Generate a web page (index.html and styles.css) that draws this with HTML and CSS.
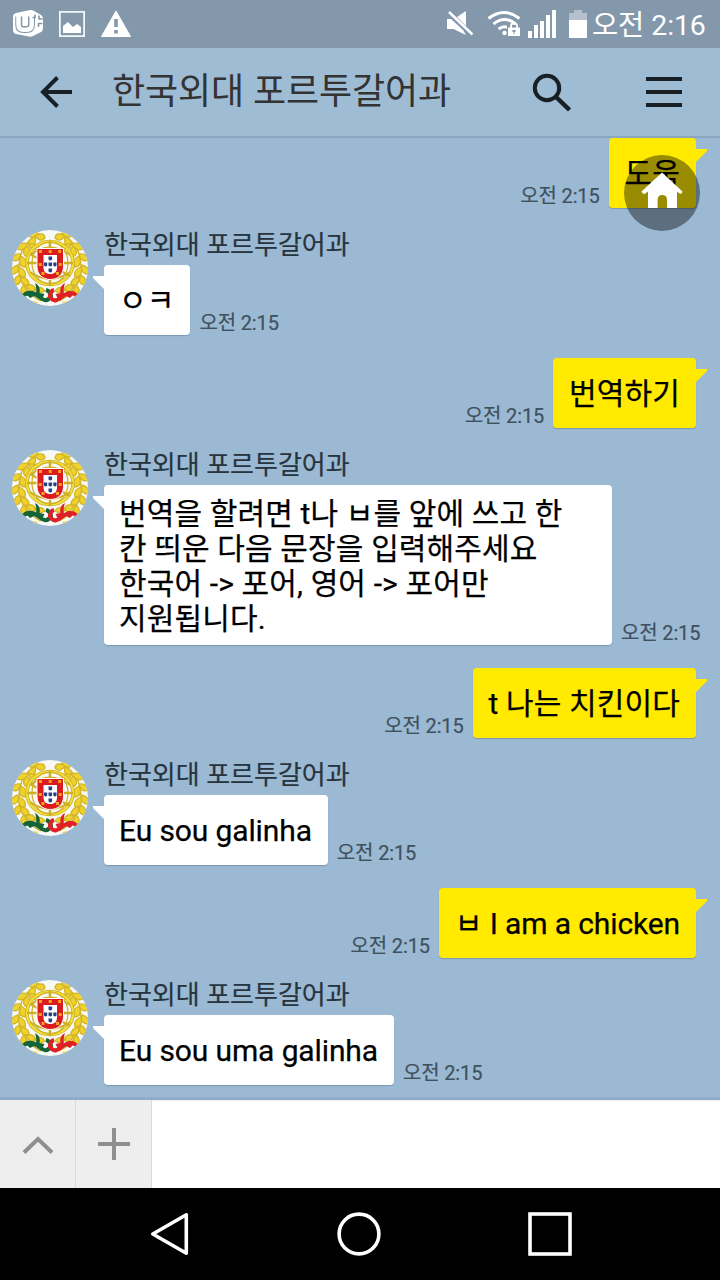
FILE: index.html
```html
<!DOCTYPE html>
<html lang="ko">
<head>
<meta charset="utf-8">
<title>한국외대 포르투갈어과</title>
<link rel="stylesheet" href="styles.css">
</head>
<body>
<svg class="defs" width="0" height="0" aria-hidden="true">
  <defs>
    <clipPath id="disc"><circle cx="38" cy="38" r="38"/></clipPath>
    <g id="laurel">
      <path d="M29 71C15 64 7 53 7 37C7 22 14 10 27 4" fill="none" stroke="#c9a80c" stroke-width="1.2"/>
      <g fill="#efd32c" stroke="#d3b628" stroke-width="1.3">
        <path d="M27 4q-7-5-11 1q4 5 11-1zM23 7q2 8-5 10q-5-6 5-10zM16 14q-9-3-11 5q7 3 11-5zM15 16q6 6 0 11q-7-4 0-11z"/>
        <path d="M9 24q-8-1-9 6q7 3 9-6zM9 26q8 4 4 11q-8-1-4-11zM6 35q-8 2-6 9q8 0 6-9zM7 37q8 3 6 10q-8 0-6-10z"/>
        <path d="M7 45q-7 4-3 10q7-2 3-10zM9 47q8 1 8 8q-8 2-8-8zM12 55q-6 5-1 10q6-3 1-10zM14 55q8-2 10 5q-7 4-10-5zM22 59q7-4 11 2q-6 4-11-2z"/>
        <path d="M23 6q9-5 10 2q-5 5-10-2zM17 14q8-1 7 5q-6 1-7-5z"/>
      </g>
    </g>
    <symbol id="crest" viewBox="0 0 76 76">
      <g clip-path="url(#disc)">
        <rect width="76" height="76" fill="#f8f8f4"/>
        <use href="#laurel"/>
        <use href="#laurel" transform="matrix(-1 0 0 1 76 0)"/>
        <g fill="none" stroke="#cdb024">
          <ellipse cx="38" cy="33" rx="23" ry="21.5" stroke-width="3.6"/>
          <ellipse cx="38" cy="33" rx="23" ry="21.5" stroke="#f4de3c" stroke-width="2"/>
          <path d="M38 11v45M15 33h46" stroke-width="2.4"/>
          <ellipse cx="38" cy="33" rx="18" ry="21" stroke-width="1.2"/>
          <path d="M18 25q20-15 40 0M18 42q20 14 40 0M18 24l40 22" stroke-width="2"/>
        </g>
        <path d="M25 18.500h26.500v18c0 8-5.500 13-13.200 13s-13.300-5-13.300-13z" fill="#dc1b1f" stroke="#fff" stroke-width="1"/>
        <path d="M31.500 25h13.500v12c0 5-2.500 7-6.700 7s-6.800-2-6.800-7z" fill="#fff"/>
        <g fill="#243f86">
          <path d="M36.500 26.500h3.600v3q-1.800 2-3.600 0zM36.500 32.500h3.600v3q-1.800 2-3.600 0zM36.500 38.500h3.600v3q-1.800 2-3.600 0zM32 32.500h3.200v3q-1.600 2-3.200 0zM41.300 32.500h3.200v3q-1.600 2-3.200 0z"/>
        </g>
        <path d="M27 20h3v3h-3zM36.700 20h3v3h-3zM46.200 20h3v3h-3zM26.700 33h3v3h-3zM46.700 33h3v3h-3zM29.500 42h3v3h-3zM44 42h3v3h-3z" fill="#f0a41a"/>
        <path d="M33 72q5-5 5-11q0 6 5 11" fill="none" stroke="#caa91a" stroke-width="1.6"/>
        <g fill="none" stroke-width="4">
          <path d="M9 68C15 61 21 62 26 66S35 73 39 66Q38 61 34 60" stroke="#14643a"/>
          <path d="M67 68C61 61 56 62 51 66S42 73 38 67Q38 61 42 60" stroke="#df2027"/>
        </g>
        <path d="M23 53q6 3 4.500 10l5 1-3 6-6-4q2-6-.500-13zM12 62l8-1 4 4-6 3z" fill="#14643a"/>
        <path d="M53 53q-6 3-4.500 10l-5 1 3 6 6-4q-2-6 .500-13zM64 62l-8-1-4 4 6 3z" fill="#df2027"/>
        <path d="M20 71l6 1-2 2zM57 71l-7 1 2 2z" fill="#efd32c"/>
      </g>
    </symbol>
  </defs>
</svg>
<div class="phone">
  <header class="status">
    <div class="status-left">
      <svg width="30" height="28" viewBox="0 0 30 28">
        <path d="M0 6q0-2 3-3L16 .300q3-.600 5 .700l7 4q2 1 2 4v9q0 3-2 4l-8 4q-2 1-4 .600L3 24q-3-.800-3-4z" fill="#fff"/>
        <path d="M5.800 6.500v8.500q0 4.500 4.700 4.500h3q5 0 5-5V6.500" fill="none" stroke="#8498ac" stroke-width="7"/>
        <path d="M5.500 5.500v9.500q0 4.800 5 4.800h3q5.200 0 5.200-5.300V5.500" fill="none" stroke="#fff" stroke-width="4.500"/>
        <path d="M22 4.500v3h-2.500M26 5.500v3.500h3.500M25.500 17v-3.500h4" fill="none" stroke="#8498ac" stroke-width="1.600"/>
      </svg>
      <svg width="26" height="26" viewBox="0 0 26 26">
        <rect x=".900" y=".900" width="24.200" height="24.200" fill="none" stroke="#f2f5f7" stroke-width="1.800"/>
        <path d="M4 22v-7l5-4 5 5 4-3 4 3v6z" fill="#fff"/>
      </svg>
      <svg width="30" height="27" viewBox="0 0 30 27">
        <path d="M15 1L29.500 26.500H.500z" fill="#fff" stroke="#fff" stroke-linejoin="round"/>
        <path d="M13.200 9h3.600v8h-3.600zM13.200 20h3.600v3.500h-3.600z" fill="#8498ac"/>
      </svg>
    </div>
    <div class="status-right">
      <svg width="142" height="30" viewBox="446 9 142 30">
        <g fill="#fff">
          <path d="M447 19h7l12-8v24l-12-6h-7z"/>
          <path d="M448 13l22 22" stroke="#8498ac" stroke-width="7"/>
          <path d="M449 12l23.500 22.500" stroke="#fff" stroke-width="2.500"/>
          <path d="M447 19h4l12 11 3 5-12-6h-7z"/>
          <circle cx="504.500" cy="33" r="2.200"/>
          <path d="M528 31h4v7h-4zM534 25h4v13h-4zM540 21h4v17h-4zM546 15h4v23h-4zM552 10h4v28h-4z"/>
          <path d="M569 20h18v18h-18z"/>
        </g>
        <path d="M574 10h8v3h5v7h-18v-7h5z" fill="#b5c1cc"/>
        <g fill="none" stroke="#fff" stroke-width="3">
          <path d="M488.500 18.500q15.500-12 31 0M493.500 24q11-9 22 0M498.500 29q6-4.500 12 0"/>
        </g>
        <path d="M507 25h14v13h-14z" fill="#8498ac"/>
        <path d="M508 27.500h12v8.500h-12z" fill="#fff"/>
        <path d="M511 28v-2.500q0-2 3-2t3 2V28" fill="none" stroke="#fff" stroke-width="1.800"/>
        <path d="M512.500 30h3v2h-1v2h-1v-2h-1z" fill="#8498ac"/>
      </svg>
      <span class="clock">오전 2:16</span>
    </div>
  </header>
  <nav class="topbar">
    <svg class="back" width="34" height="34" viewBox="39 75 34 34" fill="none" stroke="#182025" stroke-width="4"><path d="M72 92H43M57.500 77.500L43 92l14.500 14.500"/></svg>
    <h1 class="title">한국외대 포르투갈어과</h1>
    <svg class="search" width="40" height="40" viewBox="531 72 40 40" fill="none" stroke="#182025" stroke-width="4"><circle cx="547" cy="88" r="12.200"/><path d="M556 97l13.500 13" stroke-width="4.500"/></svg>
    <svg class="menu" width="36" height="30" viewBox="0 0 36 30"><path d="M0 0h36v4H0zM0 13h36v4H0zM0 26h36v4H0z" fill="#182025"/></svg>
  </nav>
  <main class="chat">
    <div class="sent">
      <span class="time">오전 2:15</span>
      <div class="bubble yellow">도움</div>
    </div>
    <div class="received">
      <svg class="avatar"><use href="#crest"/></svg>
      <div class="body">
        <div class="name">한국외대 포르투갈어과</div>
        <div class="line"><div class="bubble white">ㅇㅋ</div><span class="time">오전 2:15</span></div>
      </div>
    </div>
    <div class="sent">
      <span class="time">오전 2:15</span>
      <div class="bubble yellow">번역하기</div>
    </div>
    <div class="received">
      <svg class="avatar"><use href="#crest"/></svg>
      <div class="body">
        <div class="name">한국외대 포르투갈어과</div>
        <div class="line"><div class="bubble white long">번역을 할려면 t나 ㅂ를 앞에 쓰고 한<br>칸 띄운 다음 문장을 입력해주세요<br>한국어 -&gt; 포어, 영어 -&gt; 포어만<br>지원됩니다.</div><span class="time">오전 2:15</span></div>
      </div>
    </div>
    <div class="sent">
      <span class="time">오전 2:15</span>
      <div class="bubble yellow">t 나는 치킨이다</div>
    </div>
    <div class="received">
      <svg class="avatar"><use href="#crest"/></svg>
      <div class="body">
        <div class="name">한국외대 포르투갈어과</div>
        <div class="line"><div class="bubble white latin">Eu sou galinha</div><span class="time">오전 2:15</span></div>
      </div>
    </div>
    <div class="sent">
      <span class="time">오전 2:15</span>
      <div class="bubble yellow latin">ㅂ I am a chicken</div>
    </div>
    <div class="received">
      <svg class="avatar"><use href="#crest"/></svg>
      <div class="body">
        <div class="name">한국외대 포르투갈어과</div>
        <div class="line"><div class="bubble white latin">Eu sou uma galinha</div><span class="time">오전 2:15</span></div>
      </div>
    </div>
    <div class="home">
      <svg width="42" height="37" viewBox="641 172 42 37"><path fill="#fff" fill-rule="evenodd" d="M662 172.500L682.500 191.500Q682 194.500 679.500 193.500L677 191.500V208H667V200q0-5-4.700-5t-4.700 5v8H648V191.500L645 193.800Q642.500 194.500 641.500 191.500z"/></svg>
    </div>
  </main>
  <footer class="composer">
    <div class="tool"><svg class="chevron" width="32" height="20" viewBox="0 0 32 20"><path d="M2 17.500L16 4l14 13.500" fill="none" stroke="#8f8f8f" stroke-width="4"/></svg></div>
    <div class="tool"><svg width="32" height="32" viewBox="0 0 32 32"><path d="M14 0h4v14h14v4H18v14h-4V18H0v-4h14z" fill="#8f8f8f"/></svg></div>
    <div class="input"></div>
  </footer>
  <nav class="softkeys">
    <svg width="720" height="92" viewBox="0 1188 720 92" fill="none" stroke="#fff" stroke-width="3.600">
      <path d="M186.300 1214.800v38.400L152.800 1234z" stroke-linejoin="round"/>
      <circle cx="359" cy="1234" r="19.900"/>
      <rect x="530" y="1214" width="40" height="40"/>
    </svg>
  </nav>
</div>
</body>
</html>
```

FILE: styles.css
```css
* { box-sizing: border-box; }
body {
  margin: 0;
  font-family: Roboto, "Noto Sans CJK KR", sans-serif;
  color: #000;
}
svg { display: block; flex: none; }
.defs { position: absolute; }
.phone {
  width: 720px;
  height: 1280px;
  display: flex;
  flex-direction: column;
  overflow: hidden;
  background: #9bb9d3;
}
.status {
  height: 48px;
  flex: none;
  display: flex;
  justify-content: space-between;
  padding: 0 14px 0 13px;
  background: #8498ac;
}
.status-left { display: flex; gap: 16px; padding-top: 10px; }
.status-left svg + svg { margin-top: 1px; }
.status-left svg:last-child { margin-top: 0; }
.status-right { display: flex; gap: 4px; padding-top: 9px; }
.clock {
  width: 114px;
  font-size: 28.500px;
  line-height: 34px;
  letter-spacing: -.1px;
  color: #fff;
  white-space: nowrap;
}
.topbar {
  height: 90px;
  flex: none;
  display: flex;
  align-items: center;
  padding: 0 38px 0 39px;
  background: #9fbcd5;
  border-bottom: 2px solid #8aa7bf;
}
.title {
  margin: 0 0 0 39px;
  font-size: 36px;
  font-weight: 400;
  line-height: 48px;
  letter-spacing: -.1px;
  color: #333;
  white-space: nowrap;
}
.search { margin-left: auto; }
.menu { margin-left: 75px; }
.chat {
  position: relative;
  height: 962px;
  flex: none;
  background: #9bb9d3;
  border-bottom: 3px solid #8eacc5;
}
.sent {
  display: flex;
  justify-content: flex-end;
  align-items: flex-end;
  gap: 9px;
  padding-right: 24px;
  margin-bottom: 22px;
}
.received {
  display: flex;
  gap: 16px;
  padding-left: 12px;
  margin-bottom: 23px;
}
.avatar { width: 76px; height: 76px; }
.name {
  height: 35px;
  font-size: 26px;
  line-height: 30px;
  color: #27343d;
  -webkit-text-stroke: .2px;
}
.line { display: flex; align-items: flex-end; gap: 9px; }
.bubble {
  position: relative;
  min-height: 70px;
  padding: 17.500px 16px;
  border-radius: 4px;
  font-size: 30px;
  line-height: 35px;
  letter-spacing: .13px;
  white-space: nowrap;
  -webkit-text-stroke: .25px;
  box-shadow: 0 1px 1px rgba(60, 90, 120, .35);
}
.latin { letter-spacing: -.12px; }
.yellow { background: #ffea00; }
.white { background: #fff; padding-left: 15px; }
.long { width: 508px; padding-top: 11px; padding-bottom: 9px; }
.bubble::after {
  content: "";
  position: absolute;
  top: 11px;
  width: 12px;
  height: 13px;
}
.yellow::after {
  left: calc(100% - 1px);
  background: #ffea00;
  clip-path: polygon(0 0, 100% 0, 100% 2px, 1px 100%, 0 100%);
}
.white::after {
  right: calc(100% - 1px);
  background: #fff;
  clip-path: polygon(0 0, 100% 0, 100% 100%, 11px 100%, 0 2px);
}
.time {
  font-size: 20px;
  line-height: 24px;
  letter-spacing: -.15px;
  color: #40515e;
  white-space: nowrap;
  -webkit-text-stroke: .2px;
}
.home {
  position: absolute;
  left: 624px;
  top: 17px;
  width: 76px;
  height: 76px;
  padding: 17px;
  border-radius: 50%;
  background: rgba(0, 0, 0, .4);
}
.composer {
  height: 88px;
  flex: none;
  display: flex;
  background: #fff;
}
.tool {
  width: 76px;
  display: flex;
  align-items: center;
  justify-content: center;
  background: #eee;
  border-right: 1px solid #d9d9d9;
}
.chevron { margin-top: 2px; }
.input { flex: 1; border-top: 1px solid #eee; }
.softkeys { height: 92px; flex: none; background: #000; }
```
